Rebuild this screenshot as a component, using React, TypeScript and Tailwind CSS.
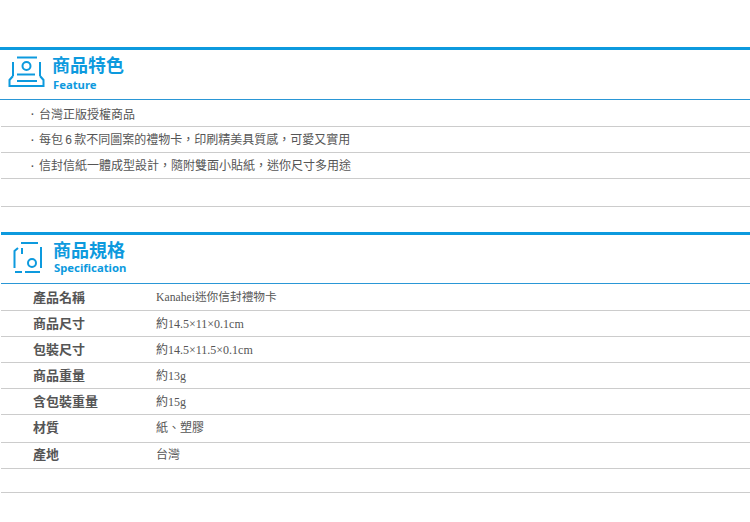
const FONT = "font-['Liberation_Sans','Noto_Sans_CJK_TC',sans-serif]";

function FeatureIcon() {
  return (
    <svg width="38" height="33" viewBox="0 0 38 33" fill="none" stroke="#0d9ade" strokeWidth="2" className="shrink-0">
      <path d="M9 1.5H29" />
      <path d="M5 6V20" />
      <path d="M32 6V20" />
      <path d="M9 18.5H27" />
      <circle cx="18.5" cy="10" r="4" />
      <path d="M5 20L1.5 24V30H35.5V24L32 20" />
      <path d="M9 25H29" />
    </svg>
  );
}

function SpecIcon() {
  return (
    <svg width="32" height="33" viewBox="0 0 32 33" fill="none" stroke="#0d9ade" strokeWidth="2" className="shrink-0">
      <path d="M9 2H26" />
      <path d="M29 6V27" />
      <path d="M2.5 27V10L6 7" />
      <path d="M10 7V13" />
      <circle cx="20" cy="22" r="4" />
      <path d="M3 31H10" />
      <path d="M13 31H28" />
    </svg>
  );
}

const specs = [
  ["產品名稱", "Kanahei迷你信封禮物卡", "h-[27px] pt-[1px]", "text-[11.7px]"],
  ["商品尺寸", "約14.5×11×0.1cm", "h-[26px]", "text-[12px]"],
  ["包裝尺寸", "約14.5×11.5×0.1cm", "h-[26px]", "text-[12px]"],
  ["商品重量", "約13g", "h-[26px]", "text-[12px]"],
  ["含包裝重量", "約15g", "h-[26px]", "text-[12px]"],
  ["材質", "紙、塑膠", "h-[28px] pb-[2px]", "text-[12px]"],
  ["產地", "台灣", "h-[26px] pb-[2px]", "text-[12px]"],
];

const features = [
  ["台灣正版授權商品", "h-[27px] pt-[3px]"],
  ["每包 6 款不同圖案的禮物卡，印刷精美具質感，可愛又實用", "h-[26px] pt-[1px]"],
  ["信封信紙一體成型設計，隨附雙面小貼紙，迷你尺寸多用途", "h-[26px] pt-[1px]"],
];

export default function App() {
  return (
    <div className={`w-[750px] h-[522px] overflow-hidden bg-white ${FONT}`}>
      <div className="h-[47px]" />
      <section className="h-[53px] border-t-[3px] border-b border-t-[#0d9ade] border-b-[#2a97d6] flex items-start">
        <div className="ml-[8px] mr-[7px] mt-[6px] flex"><FeatureIcon /></div>
        <div className="flex flex-col mt-[6px]">
          <div className="-ml-[1px] text-[18px] leading-[20px] font-bold text-[#0d9ade]">商品特色</div>
          <div className="mt-[1px] text-[11.3px] leading-[16px] font-bold text-[#0d9ade] font-['Noto_Sans']">Feature</div>
        </div>
      </section>
      <div className="pl-[1px]">
        {features.map(([f, h]) => (
          <div key={f} className={`${h} border-b border-[#cccccc] pl-[30px] flex items-center text-[12px] text-[#555555]`}>
            <span className="w-[8px] font-bold text-[10px]">·</span>
            <span className="[word-spacing:-1px]">{f}</span>
          </div>
        ))}
        <div className="h-[28px] border-b border-[#cccccc]" />
      </div>
      <div className="h-[25px]" />
      <div className="pl-[1px]">
        <section className="h-[52px] border-t-[3px] border-b border-t-[#0d9ade] border-b-[#2a97d6] flex items-start">
          <div className="ml-[11px] mr-[10px] mt-[6px] flex"><SpecIcon /></div>
          <div className="flex flex-col mt-[6px]">
            <div className="-ml-[1px] text-[18px] leading-[20px] font-bold text-[#0d9ade]">商品規格</div>
            <div className="text-[11.3px] leading-[14px] font-bold text-[#0d9ade] font-['Noto_Sans']">Specification</div>
          </div>
        </section>
        {specs.map(([k, v, h, t]) => (
          <div key={k} className={`${h} border-b border-[#cccccc] flex items-center text-[#555555]`}>
            <div className="w-[155px] pl-[32px] font-bold text-[13px]">{k}</div>
            <div className={`${t} font-['Liberation_Serif','Noto_Sans_CJK_TC',serif]`}>{v}</div>
          </div>
        ))}
        <div className="h-[24px] border-b border-[#cccccc]" />
      </div>
    </div>
  );
}
